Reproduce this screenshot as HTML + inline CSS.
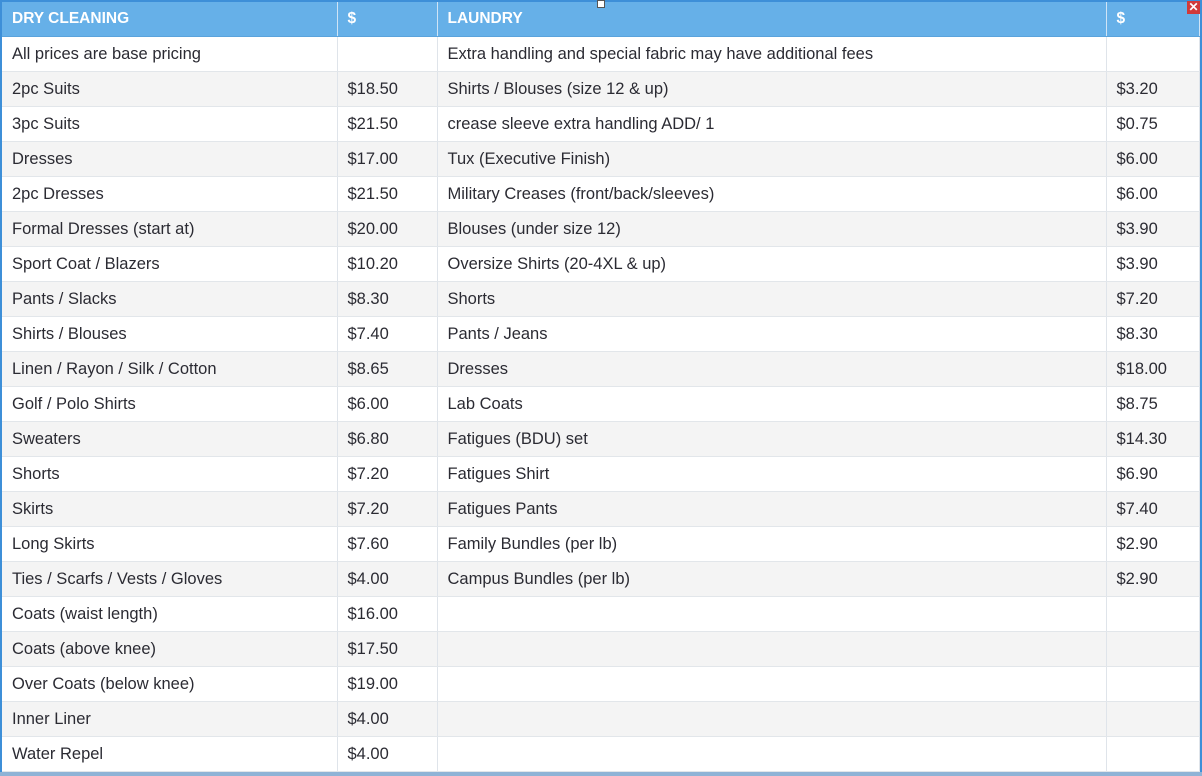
<!DOCTYPE html>
<html><head><meta charset="utf-8"><style>
html,body{margin:0;padding:0;width:1202px;height:776px;overflow:hidden;background:#fff;}
.wrap{position:absolute;left:0;top:0;width:1198px;height:770px;border-left:2px solid #3d8fd8;border-top:2px solid #3d8fd8;border-right:3px solid #3d8fd8;}
table{border-collapse:collapse;table-layout:fixed;width:1197px;font-family:"Liberation Sans",sans-serif;font-size:16.5px;color:#2b2b33;}
td,th{height:34px;padding:0 10px;border-right:1px solid #dfe4ea;border-bottom:1px solid #e2e6ea;text-align:left;white-space:nowrap;overflow:hidden;}
th{background:#66b0e8;color:#fff;font-weight:bold;font-size:15.5px;height:34px;border-right:1px solid #cfe4f6;border-bottom:1px solid #5aa3dc;}
tbody tr:nth-child(even) td{background:#f4f4f4;}
tbody tr:nth-child(odd) td{background:#fff;}
.bot{position:absolute;left:0;top:772px;width:1202px;height:4px;background:#8fb3d6;}
.x{position:absolute;left:1187px;top:1px;width:13px;height:13px;background:#d13a3a;color:#fff;font:bold 12px "Liberation Sans",sans-serif;line-height:13px;text-align:center;}
.h{position:absolute;left:597px;top:0;width:6px;height:6px;border:1px solid #555;background:#fff;}
</style></head><body>
<div class="wrap"><table>
<colgroup><col style="width:335px"><col style="width:100px"><col style="width:669px"><col style="width:93px"></colgroup>
<thead><tr><th>DRY CLEANING</th><th>$</th><th>LAUNDRY</th><th>$</th></tr></thead>
<tbody>
<tr><td>All prices are base pricing</td><td></td><td>Extra handling and special fabric may have additional fees</td><td></td></tr>
<tr><td>2pc Suits</td><td>$18.50</td><td>Shirts / Blouses (size 12 &amp; up)</td><td>$3.20</td></tr>
<tr><td>3pc Suits</td><td>$21.50</td><td>crease sleeve extra handling ADD/ 1</td><td>$0.75</td></tr>
<tr><td>Dresses</td><td>$17.00</td><td>Tux (Executive Finish)</td><td>$6.00</td></tr>
<tr><td>2pc Dresses</td><td>$21.50</td><td>Military Creases (front/back/sleeves)</td><td>$6.00</td></tr>
<tr><td>Formal Dresses (start at)</td><td>$20.00</td><td>Blouses (under size 12)</td><td>$3.90</td></tr>
<tr><td>Sport Coat / Blazers</td><td>$10.20</td><td>Oversize Shirts (20-4XL &amp; up)</td><td>$3.90</td></tr>
<tr><td>Pants / Slacks</td><td>$8.30</td><td>Shorts</td><td>$7.20</td></tr>
<tr><td>Shirts / Blouses</td><td>$7.40</td><td>Pants / Jeans</td><td>$8.30</td></tr>
<tr><td>Linen / Rayon / Silk / Cotton</td><td>$8.65</td><td>Dresses</td><td>$18.00</td></tr>
<tr><td>Golf / Polo Shirts</td><td>$6.00</td><td>Lab Coats</td><td>$8.75</td></tr>
<tr><td>Sweaters</td><td>$6.80</td><td>Fatigues (BDU) set</td><td>$14.30</td></tr>
<tr><td>Shorts</td><td>$7.20</td><td>Fatigues Shirt</td><td>$6.90</td></tr>
<tr><td>Skirts</td><td>$7.20</td><td>Fatigues Pants</td><td>$7.40</td></tr>
<tr><td>Long Skirts</td><td>$7.60</td><td>Family Bundles (per lb)</td><td>$2.90</td></tr>
<tr><td>Ties / Scarfs / Vests / Gloves</td><td>$4.00</td><td>Campus Bundles (per lb)</td><td>$2.90</td></tr>
<tr><td>Coats (waist length)</td><td>$16.00</td><td></td><td></td></tr>
<tr><td>Coats (above knee)</td><td>$17.50</td><td></td><td></td></tr>
<tr><td>Over Coats (below knee)</td><td>$19.00</td><td></td><td></td></tr>
<tr><td>Inner Liner</td><td>$4.00</td><td></td><td></td></tr>
<tr><td>Water Repel</td><td>$4.00</td><td></td><td></td></tr>
</tbody></table></div>
<div class="bot"></div>
<div class="x">✕</div>
<div class="h"></div>
</body></html>
